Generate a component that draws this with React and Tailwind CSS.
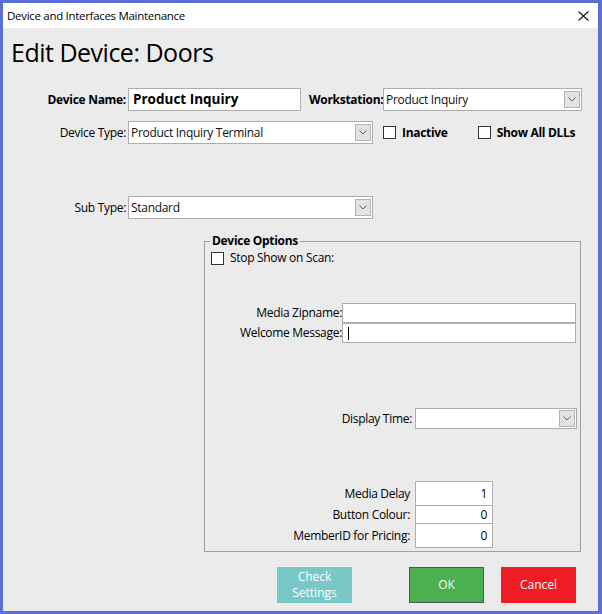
import React from "react";

function Chevron() {
  return (
    <div className="w-[16px] h-[17px] mr-[1px] bg-[#e3e3e3] border border-[#b4b4b4] flex items-center justify-center">
      <svg width="8" height="5" viewBox="0 0 8 5">
        <path d="M0.5 0.5 L4 4 L7.5 0.5" fill="none" stroke="#606060" strokeWidth="1" />
      </svg>
    </div>
  );
}

function Select({ value, className }) {
  return (
    <div className={`bg-white border border-[#adadad] flex items-center justify-between ${className}`}>
      <span className="pl-[2px] text-[12px] text-[#101010] truncate">{value}</span>
      <Chevron />
    </div>
  );
}

function Check({ label, bold }) {
  return (
    <div className="flex items-center">
      <div className="w-[13px] h-[13px] bg-white border border-[#333333]" />
      <span className={`ml-[6px] text-[12px] ${bold ? "font-bold" : ""}`}>{label}</span>
    </div>
  );
}

function NumRow({ label, value, h, first }) {
  return (
    <div className={`flex items-center ${first ? "" : "-mt-px"}`}>
      <span className="w-[206px] text-right text-[12px] pr-[1px]">{label}</span>
      <div className={`ml-[4px] w-[78px] ${h} bg-white border border-[#adadad] flex items-center justify-end pr-[5px] text-[12px]`}>
        {value}
      </div>
    </div>
  );
}

export default function App() {
  return (
    <div
      className="w-[602px] h-[614px] bg-[#ebebeb] border-[#5b6fd6] border-t-[3px] border-l-[3px] border-b-[3px] border-r-[4px] flex flex-col text-black tracking-[-0.3px]"
      style={{ fontFamily: '"Open Sans", "Noto Sans", sans-serif' }}
    >
      {/* title bar */}
      <div className="h-[25px] bg-white flex items-center justify-between pl-[4px] pr-[9px] shrink-0">
        <span className="text-[11.5px]">Device and Interfaces Maintenance</span>
        <svg width="11" height="10" viewBox="0 0 11 10">
          <path d="M0.5 0.5 L10.5 9.5 M10.5 0.5 L0.5 9.5" stroke="#111" strokeWidth="1.1" fill="none" />
        </svg>
      </div>

      <div className="flex-1 flex flex-col">
        <h1 className="pl-[8px] pt-[6px] text-[25px] leading-[36px] tracking-[-0.5px]">Edit Device: Doors</h1>

        {/* row 1 */}
        <div className="mt-[18px] h-[23px] flex items-center">
          <span className="w-[123px] text-right text-[12px] font-bold">Device Name:</span>
          <div className="ml-[2px] w-[173px] h-[23px] bg-white border border-[#adadad] flex items-center pl-[4px] text-[13.5px] font-bold tracking-[0px]">
            Product Inquiry
          </div>
          <span className="ml-[8px] w-[73px] text-[12px] font-bold">Workstation:</span>
          <Select value="Product Inquiry" className="ml-[1px] w-[199px] h-[23px]" />
        </div>

        {/* row 2 */}
        <div className="mt-[10px] h-[23px] flex items-center">
          <span className="w-[123px] text-right text-[12px]">Device Type:</span>
          <Select value="Product Inquiry Terminal" className="ml-[2px] w-[245px] h-[23px]" />
          <div className="ml-[10px]">
            <Check label="Inactive" bold />
          </div>
          <div className="ml-[30px]">
            <Check label="Show All DLLs" bold />
          </div>
        </div>

        {/* row 3 */}
        <div className="mt-[52px] h-[23px] flex items-center">
          <span className="w-[123px] text-right text-[12px]">Sub Type:</span>
          <Select value="Standard" className="ml-[2px] w-[245px] h-[23px]" />
        </div>

        {/* device options */}
        <fieldset className="mt-[14px] ml-[201px] w-[377px] h-[319px] border border-[#a0a0a0] flex flex-col">
          <legend className="ml-[5px] px-[2px] text-[12px] font-bold leading-[16px]">Device Options</legend>
          <div className="pl-[6px]">
            <Check label="Stop Show on Scan:" />
          </div>

          <div className="mt-[36px] flex items-center">
            <span className="w-[137px] text-right text-[12px]">Media Zipname:</span>
            <div className="w-[234px] h-[20px] bg-white border border-[#adadad]" />
          </div>
          <div className="flex items-center">
            <span className="w-[137px] text-right text-[12px]">Welcome Message:</span>
            <div className="w-[234px] h-[20px] bg-white border border-[#adadad] flex items-center pl-[5px]">
              <span className="w-px h-[13px] bg-black" />
            </div>
          </div>

          <div className="mt-[65px] flex items-center">
            <span className="w-[207px] text-right text-[12px]">Display Time:</span>
            <Select value="" className="ml-[3px] w-[162px] h-[21px]" />
          </div>

          <div className="mt-[52px] flex flex-col">
            <NumRow label="Media Delay" value="1" h="h-[25px]" first />
            <NumRow label="Button Colour:" value="0" h="h-[19px]" />
            <NumRow label="MemberID for Pricing:" value="0" h="h-[25px]" />
          </div>
        </fieldset>

        {/* buttons */}
        <div className="mt-[15px] flex items-start">
          <button className="ml-[274px] w-[75px] h-[36px] bg-[#79c8c8] text-white text-[12px] leading-[16px] tracking-[0px] flex flex-col items-center justify-center">
            <span>Check</span>
            <span>Settings</span>
          </button>
          <button className="ml-[57px] w-[75px] h-[36px] bg-[#4caf50] border border-[#555555] text-[#f0fff0] text-[12px] tracking-[0px]">
            OK
          </button>
          <button className="ml-[17px] w-[75px] h-[36px] bg-[#ee1c25] text-white text-[12px] tracking-[0px]">
            Cancel
          </button>
        </div>
      </div>
    </div>
  );
}
